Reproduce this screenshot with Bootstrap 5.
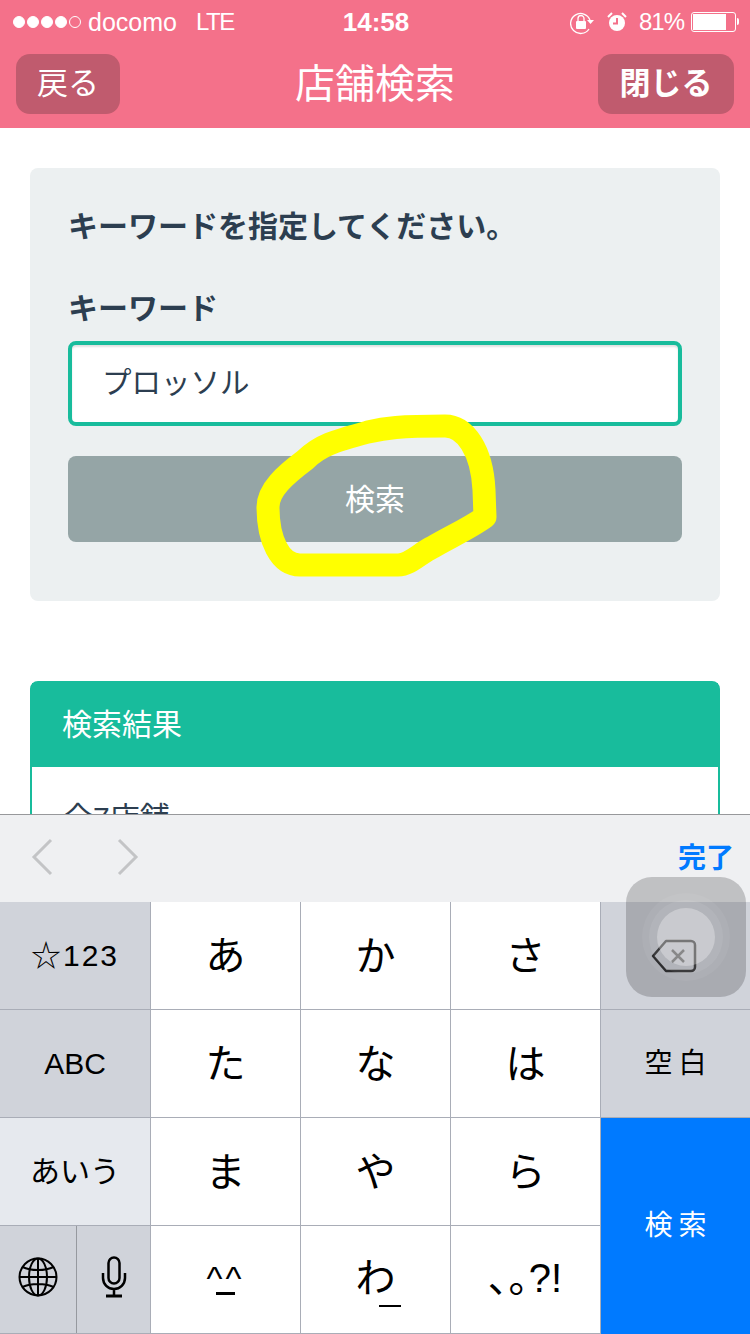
<!DOCTYPE html>
<html lang="ja">
<head>
    <meta charset="UTF-8">
    <meta name="viewport" content="width=device-width, initial-scale=1.0">
    <title>店舗検索</title>
    <link href="https://cdn.jsdelivr.net/npm/bootstrap@5.3.0/dist/css/bootstrap.min.css" rel="stylesheet">
    <script src="https://cdn.jsdelivr.net/npm/bootstrap@5.3.0/dist/js/bootstrap.bundle.min.js"></script>
    <style>
        body {
            font-family: "Liberation Sans", "Noto Sans CJK JP", sans-serif;
            color: #2c3e50;
            background: #fff;
        }
        .page-wrap {
            width: 750px;
            height: 1334px;
            overflow: hidden;
        }
        .app-head {
            background-color: #f4718a;
            height: 128px;
            color: #fff;
        }
        .status-row {
            height: 40px;
            padding: 3px 11px 0 13px;
            font-size: 25px;
            line-height: 36px;
        }
        .status-side {
            width: 300px;
        }
        .signal-dot {
            width: 12px;
            height: 12px;
            border: 1.5px solid #fff;
            border-radius: 50%;
            background: #fff;
            margin-right: 2px;
        }
        .signal-dot.off {
            background: transparent;
        }
        .carrier-name {
            margin-left: 5px;
        }
        .net-name {
            margin-left: 19px;
            font-size: 24px;
            letter-spacing: -1.5px;
        }
        .clock-text {
            font-size: 26px;
            font-weight: 700;
        }
        .rot-icon { margin-right: 13px; }
        .alarm-icon { margin-right: 12px; }
        .batt-text {
            font-size: 24px;
            letter-spacing: -1px;
            margin-right: 7px;
        }
        .batt-box {
            width: 45px;
            height: 20px;
            border: 1.5px solid #fff;
            border-radius: 3px;
            padding: 1px;
        }
        .batt-fill {
            width: 81%;
            height: 100%;
            background: #fff;
        }
        .batt-tip {
            width: 2px;
            height: 7px;
            background: #fff;
            margin-left: 1px;
            border-radius: 0 2px 2px 0;
        }
        .nav-row {
            display: grid;
            grid-template-columns: 1fr auto 1fr;
            align-items: center;
            padding: 14px 16px 0;
        }
        .head-btn {
            height: 60px;
            background-color: #c05b6e;
            border: 0;
            border-radius: 14px;
            color: #fff;
            font-size: 31px;
            line-height: 60px;
            padding: 0;
        }
        .back-btn { width: 104px; justify-self: start; }
        .close-btn { width: 136px; font-weight: 700; justify-self: end; }
        .head-title {
            font-size: 40px;
            line-height: 60px;
        }
        .main-area {
            padding: 40px 30px 0;
        }
        .form-box {
            background-color: #ecf0f1;
            border-radius: 8px;
            height: 433px;
            padding: 38px 38px 0;
        }
        .form-lead {
            font-size: 30px;
            font-weight: 700;
            line-height: 42px;
            margin-bottom: 40px;
        }
        .form-name {
            display: block;
            font-size: 30px;
            font-weight: 700;
            line-height: 42px;
            margin-bottom: 11px;
        }
        .kw-input {
            height: 85px;
            border: 4px solid #18bc9c;
            border-radius: 8px;
            font-size: 29.5px;
            color: #2c3e50;
            padding: 0 30px 7px;
            box-shadow: inset 0 2px 2px rgba(0, 0, 0, .12);
        }
        .search-btn {
            height: 86px;
            margin-top: 30px;
            padding-top: 6px;
            background-color: #95a5a6;
            border: 0;
            border-radius: 8px;
            color: #fff;
            font-size: 30px;
        }
        .result-box {
            margin-top: 80px;
            border: 2px solid #18bc9c;
            border-radius: 8px 8px 0 0;
        }
        .result-head {
            background-color: #18bc9c;
            color: #fff;
            height: 84px;
            font-size: 30px;
            line-height: 84px;
            padding-left: 30px;
        }
        .result-body {
            font-size: 30px;
            line-height: 42px;
            padding: 30px 31px;
        }
        .kb-wrap {
            left: 0;
            top: 814px;
            width: 750px;
            height: 520px;
        }
        .kb-tools {
            height: 88px;
            background-color: #eff0f2;
            border-top: 1px solid #97989b;
        }
        .kb-arrow {
            left: 28px;
            top: 21px;
        }
        .kb-done {
            right: 16px;
            top: 26px;
            font-size: 28px;
            line-height: 36px;
            font-weight: 700;
            color: #007aff;
        }
        .kb-grid {
            display: grid;
            grid-template-columns: 151px 150px 150px 150px 149px;
            grid-template-rows: repeat(4, 108px);
            background: #a9adb7;
        }
        .kb-key {
            display: flex;
            align-items: center;
            justify-content: center;
            background: #fff;
            color: #000;
            font-size: 40px;
            border-right: 1px solid #a9adb7;
            border-bottom: 1px solid #a9adb7;
        }
        .kb-key.dark {
            background: #d0d3da;
            font-size: 30px;
        }
        .kb-key.num-key {
            letter-spacing: 2px;
        }
        .kb-key.del-key {
            padding-right: 4px;
        }
        .kb-key.lite {
            background: #e6e9ee;
            font-size: 30px;
        }
        .kb-key.gap-text {
            font-size: 28px;
            letter-spacing: 6px;
            padding-left: 6px;
        }
        .kb-key.enter {
            grid-row: span 2;
            background: #007aff;
            color: #fff;
            font-size: 28px;
            letter-spacing: 6px;
            padding-left: 6px;
            border: 0;
        }
        .kb-key.last {
            border-right: 0;
        }
        .kb-key.split-cell {
            padding: 0;
            background: #a9adb7;
        }
        .split-half {
            height: 100%;
            background: #d0d3da;
            padding-bottom: 6px;
        }
        .split-half.one {
            width: 77px;
            border-right: 1px solid #96999f;
        }
        .split-half.two {
            width: 73px;
        }
        .kana-mark {
            left: 78px;
            bottom: 26px;
            width: 22px;
            height: 2px;
            background: #000;
        }
        .kana-cell {
            position: relative;
            padding-bottom: 4px;
        }
        .face-key {
            font-size: 34px;
            line-height: 20px;
            padding-top: 3px;
        }
        .face-key b {
            display: block;
            font-weight: 400;
            height: 24px;
            letter-spacing: 3px;
        }
        .face-line {
            width: 19px;
            height: 3px;
            background: #000;
            margin: 0 auto;
        }
        .punct-key {
            font-size: 40px;
            padding-bottom: 4px;
        }
        .scribble {
            left: 240px;
            top: 400px;
        }
        .touch-box {
            left: 626px;
            top: 877px;
            width: 120px;
            height: 120px;
            border-radius: 26px;
            background: rgba(50, 52, 56, .25);
        }
    </style>
</head>
<body>
    <div class="page-wrap position-relative">
        <div class="app-head">
            <div class="status-row d-flex justify-content-between align-items-center">
                <div class="status-side d-flex align-items-center">
                    <span class="signal-dot"></span>
                    <span class="signal-dot"></span>
                    <span class="signal-dot"></span>
                    <span class="signal-dot"></span>
                    <span class="signal-dot off"></span>
                    <span class="carrier-name">docomo</span>
                    <span class="net-name">LTE</span>
                </div>
                <div class="clock-text">14:58</div>
                <div class="status-side d-flex align-items-center justify-content-end">
                    <svg width="24" height="26" viewBox="0 0 24 26" class="rot-icon" fill="none" stroke="#fff" stroke-width="1.3">
                        <path d="M19 20a10 10 0 1 1 1-9"/>
                        <path d="M17 11h7l-3.500 4z" fill="#fff" stroke="none"/>
                        <rect x="6" y="12" width="10" height="8" rx="1" fill="#fff" stroke="none"/>
                        <path d="M8 12V9.500a3 3 0 0 1 6 0V12"/>
                    </svg>
                    <svg width="20" height="24" viewBox="0 0 20 24" class="alarm-icon" fill="none" stroke="#fff">
                        <circle cx="10" cy="13" r="8" fill="#fff" stroke="none"/>
                        <path d="M10 8v5.500H6" stroke="#f4718a" stroke-width="2"/>
                        <path d="M1 7l4-4M19 7l-4-4" stroke-width="2"/>
                    </svg>
                    <span class="batt-text">81%</span>
                    <div class="batt-box"><div class="batt-fill"></div></div>
                    <div class="batt-tip"></div>
                </div>
            </div>
            <div class="nav-row">
                <button class="btn head-btn back-btn" type="button">戻る</button>
                <div class="head-title">店舗検索</div>
                <button class="btn head-btn close-btn" type="button">閉じる</button>
            </div>
        </div>

        <div class="main-area">
            <div class="form-box">
                <div class="form-lead">キーワードを指定してください。</div>
                <label class="form-name" for="kw">キーワード</label>
                <input id="kw" class="form-control kw-input" type="text" value="プロッソル">
                <button class="btn search-btn w-100 d-block" type="button">検索</button>
            </div>
            <div class="result-box">
                <div class="result-head">検索結果</div>
                <div class="result-body">全7店舗</div>
            </div>
        </div>

        <!-- キーボード -->
        <div class="kb-wrap position-absolute">
            <div class="kb-tools position-relative">
                <svg class="kb-arrow position-absolute" width="115" height="44" viewBox="0 0 115 44" fill="none" stroke="#c3c4c6" stroke-width="3">
                    <path d="M23 4L6 21l17 17"/>
                    <path d="M91 4l17 17-17 17"/>
                </svg>
                <span class="kb-done position-absolute">完了</span>
            </div>
            <div class="kb-grid">
                <div class="kb-key dark num-key">☆123</div>
                <div class="kb-key">あ</div>
                <div class="kb-key">か</div>
                <div class="kb-key">さ</div>
                <div class="kb-key dark del-key last">
                    <svg width="46" height="34" viewBox="0 0 46 34" fill="none" stroke="#1c1c1e" stroke-width="2.5">
                        <path d="M15 2h25a4 4 0 0 1 4 4v22a4 4 0 0 1-4 4H15L2 17z" stroke-linejoin="round"/>
                        <path d="M21 11l12 12M33 11L21 23" stroke="#444"/>
                    </svg>
                </div>

                <div class="kb-key dark">ABC</div>
                <div class="kb-key">た</div>
                <div class="kb-key">な</div>
                <div class="kb-key">は</div>
                <div class="kb-key dark gap-text last">空白</div>

                <div class="kb-key lite">あいう</div>
                <div class="kb-key">ま</div>
                <div class="kb-key">や</div>
                <div class="kb-key">ら</div>
                <div class="kb-key enter last">検索</div>

                <div class="kb-key split-cell">
                    <div class="split-half one d-flex align-items-center justify-content-center">
                        <svg width="40" height="40" viewBox="0 0 40 40" fill="none" stroke="#000" stroke-width="2">
                            <circle cx="20" cy="20" r="18.5"/>
                            <ellipse cx="20" cy="20" rx="9" ry="18.5"/>
                            <path d="M20 1.500v37M1.500 20h37M4.500 10c8 4 23 4 31 0M4.500 30c8-4 23-4 31 0"/>
                        </svg>
                    </div>
                    <div class="split-half two d-flex align-items-center justify-content-center">
                        <svg width="26" height="42" viewBox="0 0 26 42" fill="none" stroke="#000" stroke-width="2.5">
                            <rect x="7.5" y="1.5" width="11" height="26" rx="5.5"/>
                            <path d="M2 17v5a11 11 0 0 0 22 0v-5M13 33v6"/>
                            <path d="M5 40h16" stroke-width="3"/>
                        </svg>
                    </div>
                </div>
                <div class="kb-key face-key flex-column"><b>^^</b><div class="face-line"></div></div>
                <div class="kb-key kana-cell">わ<span class="kana-mark position-absolute"></span></div>
                <div class="kb-key punct-key">､｡?!</div>
            </div>
        </div>

        <!-- 手書きの丸 -->
        <svg class="scribble position-absolute" width="270" height="190" viewBox="240 400 270 190" fill="none" stroke="#ffff00" stroke-width="23" stroke-linejoin="round" stroke-linecap="round">
            <path d="M268 507C268 490 285 475 305 460C320 445 335 441 368 432C385 428 400 426 445 426C465 426 482 450 484 490L485 517C470 528 450 537 433 547C420 553 410 565 398 565L300 565C280 565 268 540 268 507Z"/>
        </svg>

        <!-- AssistiveTouch -->
        <div class="touch-box position-absolute d-flex align-items-center justify-content-center">
            <svg width="90" height="90" viewBox="0 0 90 90">
                <circle cx="45" cy="45" r="44" fill="#fff" fill-opacity=".05"/>
                <circle cx="45" cy="45" r="37" fill="#fff" fill-opacity=".07"/>
                <circle cx="45" cy="45" r="29" fill="#fff" fill-opacity=".3"/>
            </svg>
        </div>
    </div>
</body>
</html>
